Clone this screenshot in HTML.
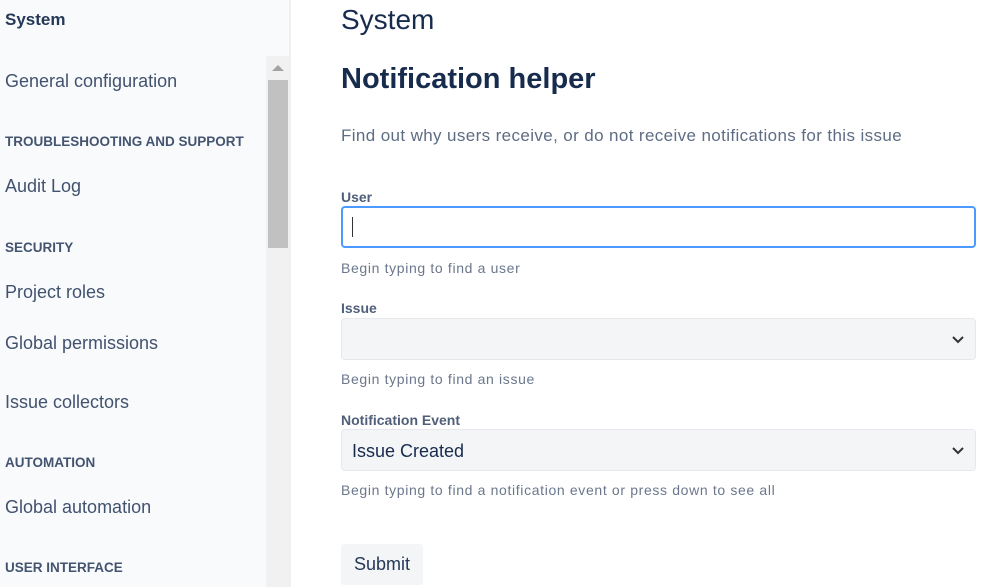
<!DOCTYPE html>
<html><head><style>
*{margin:0;padding:0;box-sizing:border-box}
body{width:999px;height:587px;overflow:hidden;background:#fff;font-family:"Liberation Sans",sans-serif;position:relative}
.sb{position:absolute;left:0;top:0;width:291px;height:587px;background:#f9fafc;border-right:2px solid #eef0f3}
.t{position:absolute;white-space:nowrap}
.it{left:5px;font-size:18px;color:#42526e}
.hd{left:5px;font-size:13.5px;font-weight:bold;color:#44546f}
.track{position:absolute;left:266px;top:56px;width:23px;height:531px;background:#f1f1f1}
.thumb{position:absolute;left:268px;top:80px;width:20px;height:168px;background:#c1c1c1}
.arr{position:absolute;left:272px;top:65px;width:0;height:0;border-left:6px solid transparent;border-right:6px solid transparent;border-bottom:6px solid #a3a3a3}
.lbl{left:341px;font-size:14px;font-weight:bold;color:#505f79}
.help{left:341px;font-size:14px;letter-spacing:0.65px;color:#6b778c}
.box{position:absolute;left:341px;width:635px;height:42px;border-radius:4px}
.sel{background:#f4f5f7;border:1px solid #e6e8ec}
.chev{position:absolute;right:10px;top:14px}
</style></head><body>
<div class="sb"></div>
<div class="track"></div><div class="thumb"></div><div class="arr"></div>
<div class="t" style="left:5px;top:10px;font-size:17px;font-weight:bold;color:#253858">System</div>
<div class="t it" style="top:71px">General configuration</div>
<div class="t hd" style="top:134px">TROUBLESHOOTING AND SUPPORT</div>
<div class="t it" style="top:176px">Audit Log</div>
<div class="t hd" style="top:240px">SECURITY</div>
<div class="t it" style="top:282px">Project roles</div>
<div class="t it" style="top:333px">Global permissions</div>
<div class="t it" style="top:392px">Issue collectors</div>
<div class="t hd" style="top:455px">AUTOMATION</div>
<div class="t it" style="top:497px">Global automation</div>
<div class="t hd" style="top:560px">USER INTERFACE</div>

<div class="t" style="left:341px;top:4px;font-size:28px;color:#172b4d">System</div>
<div class="t" style="left:341px;top:63px;font-size:29px;font-weight:bold;color:#172b4d">Notification helper</div>
<div class="t" style="left:341px;top:126px;font-size:17px;letter-spacing:0.38px;color:#5e6c84">Find out why users receive, or do not receive notifications for this issue</div>

<div class="t lbl" style="top:189px">User</div>
<div class="box" style="top:206px;border:2px solid #4c9aff;background:#fff"><div style="position:absolute;left:9px;top:9px;width:1px;height:20px;background:#333"></div></div>
<div class="t help" style="top:260px">Begin typing to find a user</div>

<div class="t lbl" style="top:300px">Issue</div>
<div class="box sel" style="top:318px"><svg class="chev" width="14" height="12" viewBox="0 0 14 12"><path d="M2 4l5 5 5-5" fill="none" stroke="#333" stroke-width="2"/></svg></div>
<div class="t help" style="top:371px">Begin typing to find an issue</div>

<div class="t lbl" style="top:412px">Notification Event</div>
<div class="box sel" style="top:429px"><div class="t" style="left:10px;top:11px;font-size:18px;color:#172b4d">Issue Created</div><svg class="chev" width="14" height="12" viewBox="0 0 14 12"><path d="M2 4l5 5 5-5" fill="none" stroke="#333" stroke-width="2"/></svg></div>
<div class="t help" style="top:482px">Begin typing to find a notification event or press down to see all</div>

<div style="position:absolute;left:341px;top:544px;width:82px;height:41px;background:#f4f5f7;border-radius:3px;font-size:18px;color:#253858;text-align:center;line-height:40px">Submit</div>
</body></html>
